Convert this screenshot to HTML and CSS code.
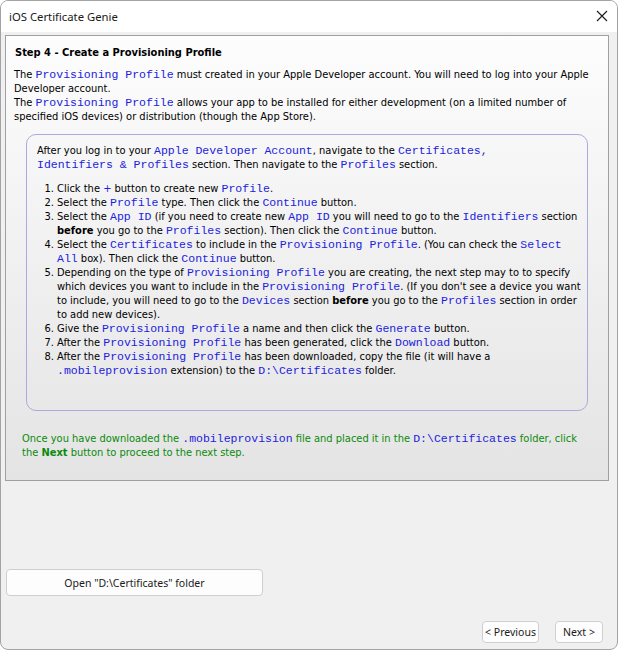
FILE: index.html
```html
<!DOCTYPE html>
<html lang="en">
<head>
<meta charset="utf-8">
<title>iOS Certificate Genie</title>
<link rel="stylesheet" href="styles.css">
</head>
<body>
<div class="window">
  <div class="titlebar">
    <span class="title">iOS Certificate Genie</span>
    <span class="close" aria-label="Close">
      <svg width="12" height="12" viewBox="0 0 12 12"><path d="M1 1 L11 11 M11 1 L1 11" stroke="#1a1a1a" stroke-width="1.1" fill="none"/></svg>
    </span>
  </div>
  <div class="client">
    <div class="panel">
      <h1 class="heading">Step 4 - Create a Provisioning Profile</h1>
      <p class="intro">The <code>Provisioning Profile</code> must created in your Apple Developer account. You will need to log into your Apple Developer account.<br>The <code>Provisioning Profile</code> allows your app to be installed for either development (on a limited number of specified iOS devices) or distribution (though the App Store).</p>
      <div class="box">
        <p class="lead">After you log in to your <code>Apple Developer Account</code>, navigate to the <code>Certificates,</code> <code>Identifiers &amp; Profiles</code> section. Then navigate to the <code>Profiles</code> section.</p>
        <ol class="steps">
          <li>Click the <span class="plus">+</span> button to create new <code>Profile</code>.</li>
          <li>Select the <code>Profile</code> type. Then click the <code>Continue</code> button.</li>
          <li>Select the <code>App ID</code> (if you need to create new <code>App ID</code> you will need to go to the <code>Identifiers</code> section <b>before</b> you go to the <code>Profiles</code> section). Then click the <code>Continue</code> button.</li>
          <li>Select the <code>Certificates</code> to include in the <code>Provisioning Profile</code>. (You can check the <code>Select</code> <code>All</code> box). Then click the <code>Continue</code> button.</li>
          <li>Depending on the type of <code>Provisioning Profile</code> you are creating, the next step may to to specify which devices you want to include in the <code>Provisioning Profile</code>. (If you don't see a device you want to include, you will need to go to the <code>Devices</code> section <b>before</b> you go to the <code>Profiles</code> section in order to add new devices).</li>
          <li>Give the <code>Provisioning Profile</code> a name and then click the <code>Generate</code> button.</li>
          <li>After the <code>Provisioning Profile</code> has been generated, click the <code>Download</code> button.</li>
          <li>After the <code>Provisioning Profile</code> has been downloaded, copy the file (it will have a <code>.mobileprovision</code> extension) to the <code>D:\Certificates</code> folder.</li>
        </ol>
      </div>
      <p class="note">Once you have downloaded the <code>.mobileprovision</code> file and placed it in the <code>D:\Certificates</code> folder, click the <b>Next</b> button to proceed to the next step.</p>
    </div>
    <button class="btn open">Open "D:\Certificates" folder</button>
    <div class="nav">
      <button class="btn prev">&lt; Previous</button>
      <button class="btn next">Next &gt;</button>
    </div>
  </div>
</div>
</body>
</html>
```
FILE: styles.css
```css
* { box-sizing: border-box; }
html, body { margin: 0; padding: 0; background: #ffffff; }
body { width: 618px; height: 651px; overflow: hidden; }

.window {
  width: 618px;
  height: 650px;
  border: 1px solid #a3a3a3;
  border-radius: 8px;
  background: #f0f0f0;
  display: flex;
  flex-direction: column;
  overflow: hidden;
}

.titlebar {
  height: 31px;
  flex: none;
  background: #ffffff;
  display: flex;
  align-items: center;
  justify-content: space-between;
  padding: 0 9px 1px 8px;
  font-family: "Noto Sans", sans-serif;
  font-size: 11.3px;
  color: #1a1a1a;
}
.close { display: flex; width: 12px; height: 12px; }

.client {
  flex: 1;
  display: flex;
  flex-direction: column;
  align-items: flex-start;
  padding: 3px 8px 0 4px;
}

.panel {
  width: 604px;
  height: 446px;
  flex: none;
  border: 1px solid #a0a0a0;
  background: linear-gradient(#fdfdfd, #e4e4e4);
  padding: 9px 8px 0 8px;
  font-family: "DejaVu Sans Condensed", "DejaVu Sans", sans-serif;
  font-size: 11px;
  line-height: 14px;
  color: #000;
}

.heading {
  margin: 0 0 7px 1px;
  font-size: 11px;
  line-height: 16px;
  font-weight: bold;
}

p { margin: 0; }

code {
  font-family: "Liberation Mono", monospace;
  font-size: 11.5px;
  color: #2222dd;
  white-space: nowrap;
}
.plus { color: #2222dd; }

.intro { margin: 0 4px 10px 0; }

.box {
  margin: 0 12px 0 12px;
  border: 1px solid #aaaadd;
  border-radius: 10px;
  padding: 9px 4px 32px 10px;
}

.lead { margin: 0 8px 10px 0; }

.steps { margin: 0; padding-left: 20px; }

.note {
  margin: 21px 16px 0 8px;
  color: #0b8a0b;
}

.btn {
  font-family: "Noto Sans", sans-serif;
  font-size: 10.5px;
  color: #1a1a1a;
  background: #fdfdfd;
  border: 1px solid #cfcfcf;
  border-radius: 4px;
  padding: 0;
  white-space: nowrap;
}

.open {
  margin: 88px 0 0 1px;
  width: 257px;
  height: 27px;
}

.nav {
  align-self: stretch;
  display: flex;
  justify-content: flex-end;
  gap: 16px;
  margin-top: 25px;
  padding-right: 6px;
}
.nav .btn { height: 22px; }
.prev { width: 57px; }
.next { width: 48px; }
```
